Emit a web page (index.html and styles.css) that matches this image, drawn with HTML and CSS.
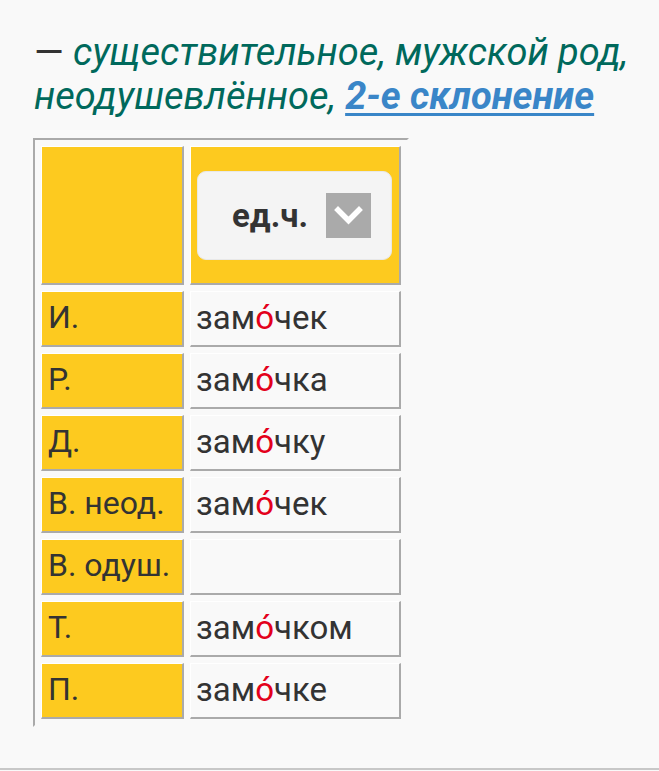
FILE: index.html
```html
<!DOCTYPE html>
<html lang="ru">
<head>
<meta charset="utf-8">
<link rel="stylesheet" href="styles.css">
</head>
<body>
<div class="page">
  <p class="gram"><span class="dash">—</span> <span class="desc">существительное, мужской род, неодушевлённое, <a class="link" href="#">2-е склонение</a></span></p>
  <table class="decl">
    <tr class="head">
      <th class="case"></th>
      <th class="num">
        <div class="select">
          <span class="select-label">ед.ч.</span>
          <span class="select-arrow"><svg width="45" height="45" viewBox="0 0 45 45"><path d="M12 17 L22.5 27.5 L33 17" fill="none" stroke="#fff" stroke-width="5.5" stroke-linecap="square"/></svg></span>
        </div>
      </th>
    </tr>
    <tr><th class="case">И.</th><td class="form">зам<span class="acc">о́</span>чек</td></tr>
    <tr><th class="case">Р.</th><td class="form">зам<span class="acc">о́</span>чка</td></tr>
    <tr><th class="case">Д.</th><td class="form">зам<span class="acc">о́</span>чку</td></tr>
    <tr><th class="case">В. неод.</th><td class="form">зам<span class="acc">о́</span>чек</td></tr>
    <tr><th class="case">В. одуш.</th><td class="form"></td></tr>
    <tr><th class="case">Т.</th><td class="form">зам<span class="acc">о́</span>чком</td></tr>
    <tr><th class="case">П.</th><td class="form">зам<span class="acc">о́</span>чке</td></tr>
  </table>
</div>
<div class="footer"></div>
</body>
</html>
```
FILE: styles.css
```css
html, body {
  margin: 0;
  padding: 0;
  background: #f9f9f9;
}
body {
  font-family: Roboto, "Noto Sans", sans-serif;
  color: #333;
}
.page {
  padding: 30px 0 0 33px;
  height: 768px;
  box-sizing: border-box;
}
.gram {
  margin: 0 0 0 1px;
  font-size: 38px;
  line-height: 44px;
  width: 620px;
}
.dash {
  color: #333;
}
.desc {
  font-style: italic;
  color: #00695c;
}
.link {
  color: #3a86c8;
  font-weight: bold;
  text-decoration: underline;
  text-decoration-thickness: 3px;
  text-underline-offset: 4px;
}
.decl {
  margin-top: 20px;
  border-collapse: separate;
  border-spacing: 6px;
  border-style: solid;
  border-width: 2px;
  border-color: #aaa #f9f9f9 #f9f9f9 #aaa;
}
.decl th, .decl td {
  box-sizing: border-box;
  border-style: solid;
  border-width: 1px 2px 2px 1px;
  border-color: #fff #aaa #aaa #fff;
  padding: 0 6px 3px 6px;
  height: 56px;
  font-size: 32px;
  font-weight: normal;
  text-align: left;
  vertical-align: middle;
  white-space: nowrap;
}
.decl .case {
  width: 143px;
  background: #fdca1f;
}
.decl .form {
  width: 211px;
  background: #f9f9f9;
  padding-left: 5px;
  font-size: 33px;
}
.decl .head th {
  height: 139px;
  padding-bottom: 0;
}
.decl .num {
  background: #fdca1f;
  padding: 0 0 0 6px;
}
.select {
  box-sizing: border-box;
  width: 195px;
  height: 89px;
  background: #f4f4f4;
  border: 1px solid #e8e8e8;
  border-radius: 9px;
  display: flex;
  align-items: center;
  padding-left: 34px;
}
.select-label {
  font-weight: bold;
  font-size: 33px;
  color: #333;
  width: 94px;
}
.select-arrow {
  width: 45px;
  height: 45px;
  background: #aaa;
  display: block;
}
.select-arrow svg {
  display: block;
}
.acc {
  color: #e3001b;
}
.footer {
  height: 1px;
  border-top: 2px solid #c8c8c8;
  background: #f9f9f9;
}
```
